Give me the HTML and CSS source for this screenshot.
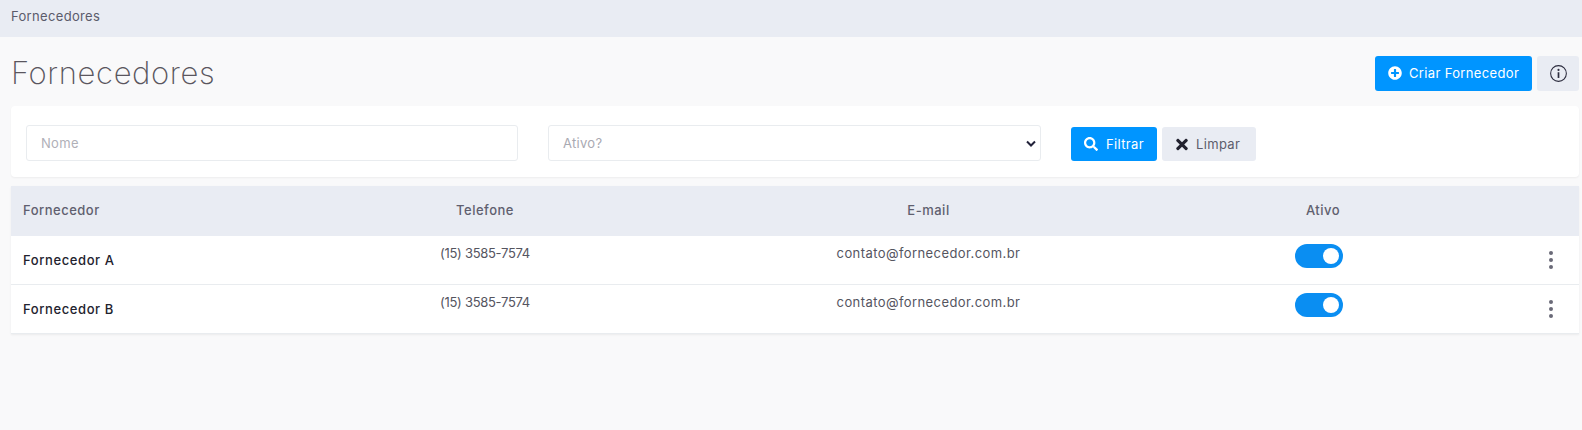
FILE: index.html
```html
<!DOCTYPE html>
<html lang="pt-BR">
<head>
<meta charset="utf-8">
<title>Fornecedores</title>
<link rel="stylesheet" href="styles.css">
</head>
<body>
<nav class="crumb">Fornecedores</nav>
<main class="content">
  <header class="head">
    <h1 class="title">Fornecedores</h1>
    <div class="actions">
      <button class="btn btn-primary btn-create" type="button">
        <svg class="ico" viewBox="0 0 512 512"><path fill="currentColor" d="M256 8C119 8 8 119 8 256s111 248 248 248 248-111 248-248S393 8 256 8zm144 276c0 6.6-5.4 12-12 12h-92v92c0 6.6-5.4 12-12 12h-56c-6.6 0-12-5.4-12-12v-92h-92c-6.6 0-12-5.4-12-12v-56c0-6.6 5.4-12 12-12h92v-92c0-6.6 5.4-12 12-12h56c6.6 0 12 5.4 12 12v92h92c6.6 0 12 5.4 12 12v56z"/></svg>
        Criar Fornecedor
      </button>
      <button class="btn btn-info" type="button" aria-label="Informações">
        <svg class="ico-info" viewBox="0 0 16 16"><circle cx="8" cy="8" r="7.4" fill="none" stroke="currentColor" stroke-width="1"/><circle cx="8" cy="4.6" r="1" fill="currentColor"/><path fill="currentColor" d="M7.2 6.8h1.6v5.4h-1.6z"/></svg>
      </button>
    </div>
  </header>

  <section class="card filters">
    <input class="field field-name" type="text" placeholder="Nome">
    <select class="field field-select"><option>Ativo?</option></select>
    <div class="filter-btns">
      <button class="btn btn-primary btn-filter" type="button">
        <svg class="ico" viewBox="0 0 512 512"><path fill="currentColor" d="M505 442.7L405.3 343c-4.5-4.5-10.6-7-17-7H372c27.6-35.3 44-79.7 44-128C416 93.1 322.9 0 208 0S0 93.1 0 208s93.1 208 208 208c48.3 0 92.7-16.4 128-44v16.3c0 6.4 2.5 12.5 7 17l99.7 99.7c9.4 9.4 24.6 9.4 33.9 0l28.3-28.3c9.4-9.4 9.4-24.6.1-34zM208 336c-70.7 0-128-57.2-128-128 0-70.7 57.2-128 128-128 70.7 0 128 57.2 128 128 0 70.7-57.2 128-128 128z"/></svg>
        Filtrar
      </button>
      <button class="btn btn-light btn-clear" type="button">
        <svg class="ico ico-x" viewBox="0 0 352 512"><path fill="currentColor" d="M242.72 256l100.07-100.07c12.28-12.28 12.28-32.19 0-44.48l-22.24-22.24c-12.28-12.28-32.19-12.28-44.48 0L176 189.28 75.93 89.21c-12.28-12.28-32.19-12.28-44.48 0L9.21 111.45c-12.28 12.28-12.28 32.19 0 44.48L109.28 256 9.21 356.07c-12.28 12.28-12.28 32.19 0 44.48l22.24 22.24c12.28 12.28 32.2 12.28 44.48 0L176 322.72l100.07 100.07c12.28 12.28 32.2 12.28 44.48 0l22.24-22.24c12.28-12.28 12.28-32.19 0-44.48L242.72 256z"/></svg>
        Limpar
      </button>
    </div>
  </section>

  <table class="grid">
    <colgroup>
      <col class="c1"><col class="c2"><col class="c3"><col class="c4"><col class="c5">
    </colgroup>
    <thead>
      <tr><th class="left">Fornecedor</th><th>Telefone</th><th>E-mail</th><th>Ativo</th><th></th></tr>
    </thead>
    <tbody>
      <tr>
        <td class="left name">Fornecedor A</td>
        <td class="top phone">(15) 3585-7574</td>
        <td class="top email">contato@fornecedor.com.br</td>
        <td class="top toggle"><span class="switch"></span></td>
        <td class="more"><svg class="kebab" viewBox="0 0 6 20"><circle cx="3" cy="3" r="2"/><circle cx="3" cy="10" r="2"/><circle cx="3" cy="17" r="2"/></svg></td>
      </tr>
      <tr>
        <td class="left name">Fornecedor B</td>
        <td class="top phone">(15) 3585-7574</td>
        <td class="top email">contato@fornecedor.com.br</td>
        <td class="top toggle"><span class="switch"></span></td>
        <td class="more"><svg class="kebab" viewBox="0 0 6 20"><circle cx="3" cy="3" r="2"/><circle cx="3" cy="10" r="2"/><circle cx="3" cy="17" r="2"/></svg></td>
      </tr>
    </tbody>
  </table>
</main>
</body>
</html>
```
FILE: styles.css
```css
* { box-sizing: border-box; }
html, body { margin: 0; height: 100%; overflow: hidden; }
body {
  background: #f9f9fa;
  color: #4c4c5a;
  font-family: Inter, "Noto Sans", sans-serif;
  font-size: 13px;
}
.crumb {
  height: 37px;
  background: #e9ecf3;
  padding: 0 11px;
  line-height: 33px;
  color: #5b5b6b;
  font-size: 13px;
  letter-spacing: 0.33px;
}
.content { padding: 0 3px 0 11px; }
.head {
  display: flex;
  justify-content: space-between;
  align-items: center;
  padding-top: 3px;
  height: 69px;
}
.title {
  margin: 0;
  font-size: 31px;
  font-weight: 200;
  color: #5a565e;
  letter-spacing: 0.63px;
  line-height: 36px;
}
.actions { display: flex; gap: 5px; }
.btn {
  display: inline-flex;
  align-items: center;
  height: 35px;
  border: 0;
  border-radius: 3px;
  font: inherit;
  font-size: 13px;
  letter-spacing: 0.35px;
  padding: 0;
}
.btn-primary { background: #0095ff; color: #fff; }
.btn-light { background: #e9ecf3; color: #5d5d6c; }
.btn-info { background: #e9ecf3; color: #2c2c3e; width: 42px; justify-content: center; }
.btn-create { width: 157px; padding-left: 13px; gap: 7px; }
.btn-filter { width: 86px; padding-left: 13px; gap: 8px; }
.btn-clear { width: 94px; padding-left: 14px; gap: 8px; }
.ico { width: 14px; height: 14px; flex: none; }
.ico-x { width: 12px; height: 17px; }
.btn-light .ico { color: #22222f; }
.ico-info { width: 17px; height: 17px; }
.card {
  background: #fff;
  border-radius: 4px;
  box-shadow: 0 1px 2px rgba(0, 0, 0, 0.05);
}
.filters {
  display: flex;
  align-items: flex-start;
  height: 71px;
  padding: 19px 15px 0;
}
.field {
  height: 36px;
  border: 1px solid #e9ecef;
  border-radius: 3px;
  background: #fff;
  font: inherit;
  font-size: 13px;
  letter-spacing: 0.3px;
  color: #a9a9b2;
  padding: 0 14px;
  outline: none;
}
.field::placeholder { color: #b0b0b8; opacity: 1; }
.field-name { width: 492px; }
.field-select {
  width: 493px;
  margin-left: 30px;
  appearance: none;
  background-image: url("data:image/svg+xml,%3Csvg xmlns='http://www.w3.org/2000/svg' viewBox='0 0 10 7'%3E%3Cpath d='M1 1.5l4 4 4-4' fill='none' stroke='%2322223a' stroke-width='2'/%3E%3C/svg%3E");
  background-repeat: no-repeat;
  background-position: right 4px center;
  background-size: 10px 7px;
}
.filter-btns { display: flex; gap: 5px; margin-left: 30px; margin-top: 2px; }
.filter-btns .btn { height: 34px; }
.grid {
  width: 1568px;
  margin-top: 9px;
  border-collapse: collapse;
  table-layout: fixed;
  background: #fff;
  box-shadow: 0 1px 2px rgba(0, 0, 0, 0.06);
}
.c1 { width: 279px; }
.c2 { width: 390px; }
.c3 { width: 497px; }
.c4 { width: 292px; }
.c5 { width: 110px; }
th {
  height: 50px;
  background: #e9ecf3;
  color: #5f5f6f;
  font-weight: 500;
  font-size: 13px;
  letter-spacing: 0.5px;
  text-align: center;
  padding: 0;
  padding-bottom: 2px;
}
td {
  height: 48.5px;
  padding: 0;
  text-align: center;
  font-size: 13px;
  color: #55555f;
  border-bottom: 1px solid #e9ecef;
}
.left { text-align: left; padding-left: 12px; }
td.name { font-weight: 500; color: #22222e; letter-spacing: 0.6px; }
td.top { vertical-align: top; padding-top: 9px; }
td.phone { letter-spacing: -0.3px; }
td.email { letter-spacing: 0.42px; }
td.toggle { padding-top: 8px; }
.switch {
  display: inline-block;
  position: relative;
  width: 48px;
  height: 24px;
  border-radius: 12px;
  background: #0a8ef2;
  vertical-align: top;
  margin-right: 8px;
}
.switch::after {
  content: "";
  position: absolute;
  top: 4px;
  right: 4px;
  width: 16px;
  height: 16px;
  border-radius: 50%;
  background: #fff;
}
.more { text-align: right; padding-right: 25px; }
.kebab { width: 6px; height: 20px; fill: #6a6a78; vertical-align: middle; }
```
